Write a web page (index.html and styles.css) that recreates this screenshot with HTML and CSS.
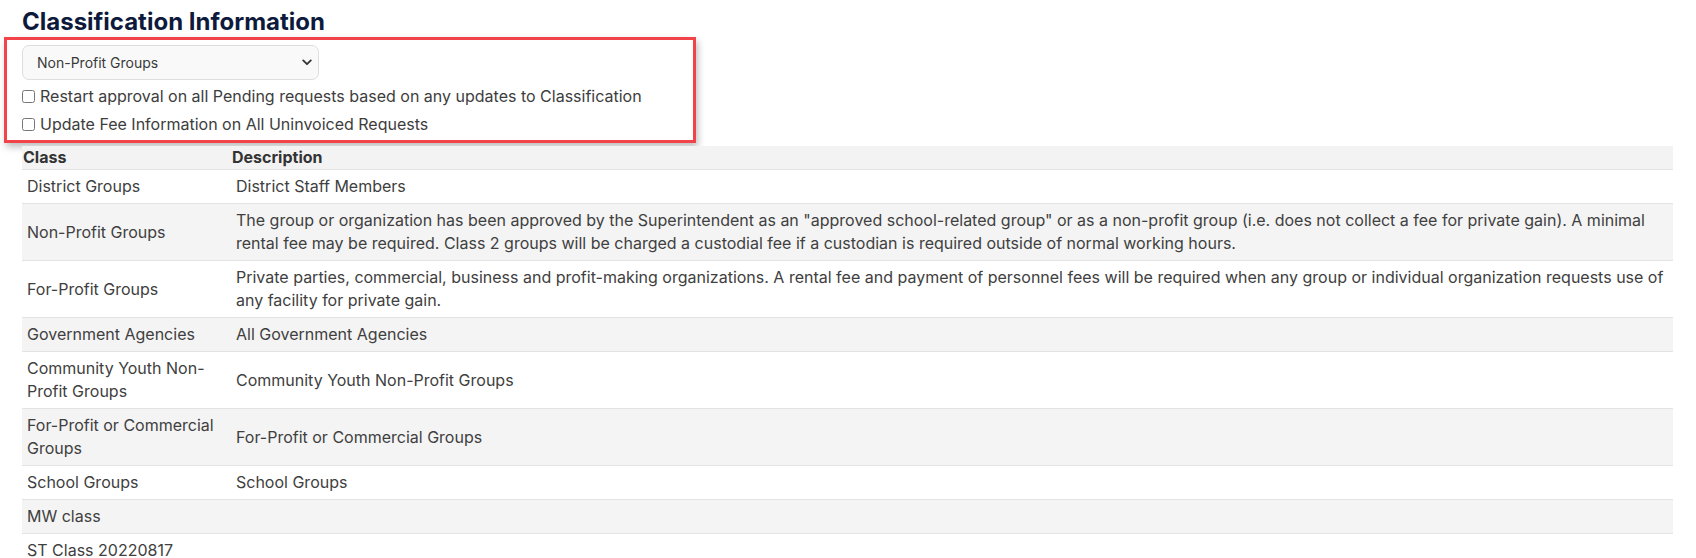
FILE: index.html
```html
<!DOCTYPE html>
<html lang="en">
<head>
<meta charset="utf-8">
<title>Classification Information</title>
<link rel="stylesheet" href="styles.css">
</head>
<body>
<div class="page">
  <h2 class="title">Classification Information</h2>
  <div class="highlight">
    <div class="select-wrap">
      <select class="select">
        <option>Non-Profit Groups</option>
      </select>
      <svg class="chevron" width="10" height="7" viewBox="0 0 10 7"><path d="M1.2 1.4 L5 5.2 L8.8 1.4" fill="none" stroke="#333" stroke-width="1.8" stroke-linecap="round" stroke-linejoin="round"/></svg>
    </div>
    <label class="check"><input type="checkbox" class="cb"><span>Restart approval on all Pending requests based on any updates to Classification</span></label>
    <label class="check"><input type="checkbox" class="cb"><span>Update Fee Information on All Uninvoiced Requests</span></label>
  </div>
  <table class="grid">
    <thead>
      <tr><th class="c-class">Class</th><th>Description</th></tr>
    </thead>
    <tbody>
      <tr><td>District Groups</td><td>District Staff Members</td></tr>
      <tr><td>Non-Profit Groups</td><td>The group or organization has been approved by the Superintendent as an "approved school-related group" or as a non-profit group (i.e. does not collect a fee for private gain). A minimal rental fee may be required. Class 2 groups will be charged a custodial fee if a custodian is required outside of normal working hours.</td></tr>
      <tr><td>For-Profit Groups</td><td>Private parties, commercial, business and profit-making organizations. A rental fee and payment of personnel fees will be required when any group or individual organization requests use of any facility for private gain.</td></tr>
      <tr><td>Government Agencies</td><td>All Government Agencies</td></tr>
      <tr><td>Community Youth Non-Profit Groups</td><td>Community Youth Non-Profit Groups</td></tr>
      <tr><td>For-Profit or Commercial Groups</td><td>For-Profit or Commercial Groups</td></tr>
      <tr><td>School Groups</td><td>School Groups</td></tr>
      <tr><td>MW class</td><td></td></tr>
      <tr><td>ST Class 20220817</td><td></td></tr>
    </tbody>
  </table>
</div>
</body>
</html>
```
FILE: styles.css
```css
html, body {
  margin: 0;
  padding: 0;
  background: #ffffff;
}
body {
  font-family: Inter, "Noto Sans", sans-serif;
  color: #404040;
  font-size: 16px;
  line-height: 23px;
}
.page {
  padding: 0 23px 0 4px;
}
.title {
  margin: 7px 0 1px 18px;
  font-size: 24px;
  line-height: 29px;
  font-weight: 700;
  color: #0e1a3c;
}
.highlight {
  width: 659px;
  border: 3px solid #f2434a;
  padding: 5px 12px 4px 15px;
  box-shadow: 2px 4px 7px rgba(0, 0, 0, 0.26);
  display: flex;
  flex-direction: column;
  gap: 4px;
}
.select-wrap {
  position: relative;
  width: 297px;
}
.select {
  appearance: none;
  -webkit-appearance: none;
  display: block;
  width: 297px;
  height: 35px;
  margin: 0;
  padding: 0 14px;
  border: 1px solid #dedede;
  border-radius: 7px;
  background: #f9f9f9;
  font-family: Inter, "Noto Sans", sans-serif;
  font-size: 14px;
  color: #3a3a3a;
}
.chevron {
  position: absolute;
  right: 7px;
  top: 14px;
}
.check {
  display: flex;
  align-items: center;
  gap: 5px;
  height: 24px;
  color: #3d3d3d;
}
.cb {
  margin: 0;
  width: 13px;
  height: 13px;
}
.grid {
  margin: 3px 0 0 18px;
  width: calc(100% - 18px);
  border-collapse: collapse;
}
.grid th {
  text-align: left;
  font-weight: 700;
  color: #333333;
  background: #f3f3f3;
  padding: 0 0 0 1px;
  border-bottom: 1px solid #e3e3e3;
  line-height: 23px;
}
.grid th.c-class {
  width: 208px;
}
.grid td {
  padding: 5px 6px 5px 5px;
  border-bottom: 1px solid #e3e3e3;
  vertical-align: middle;
}
.grid tbody tr:nth-child(even) td {
  background: #f4f4f4;
}
.grid tbody tr:last-child td {
  border-bottom: none;
}
```
